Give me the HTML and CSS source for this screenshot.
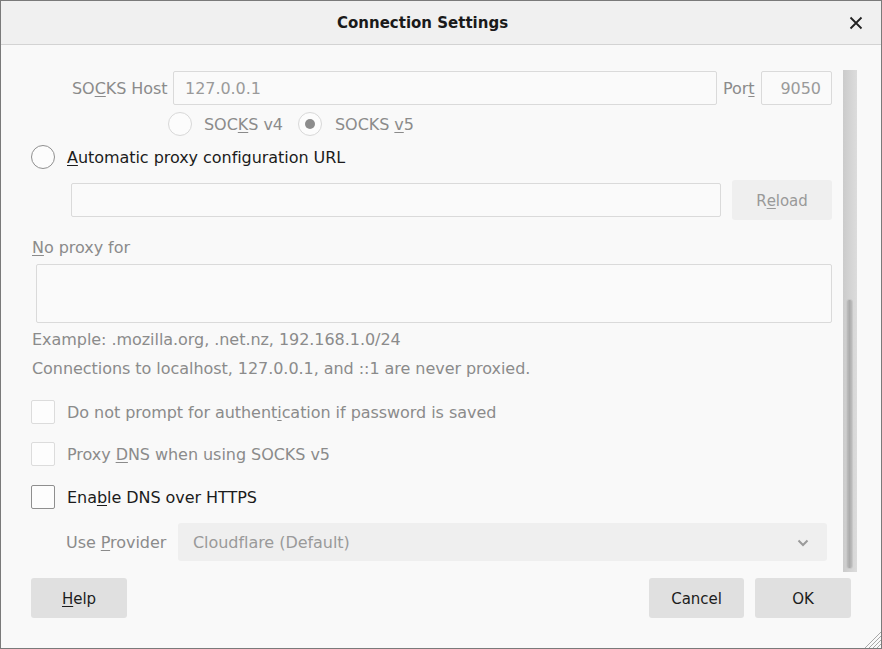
FILE: index.html
```html
<!DOCTYPE html>
<html>
<head>
<meta charset="utf-8">
<link rel="stylesheet" href="styles.css">
</head>
<body>
<div class="window">
  <div class="header">
    <div class="title">Connection Settings</div>
    <div class="close">
      <svg width="14" height="14" viewBox="0 0 14 14"><path d="M1.5 1.5 L12.5 12.5 M12.5 1.5 L1.5 12.5" stroke="#222" stroke-width="1.8" fill="none"/></svg>
    </div>
  </div>
  <div class="content">
    <div class="scrollarea">
      <div class="row-host">
        <span class="lbl-host dis">SO<u>C</u>KS Host</span>
        <div class="input host-input"><span class="val">127.0.0.1</span></div>
        <span class="lbl-port dis">Por<u>t</u></span>
        <div class="input port-input"><span class="val">9050</span></div>
      </div>
      <div class="row-socks">
        <span class="radio dis-r"></span>
        <span class="lbl-v4 dis">SOC<u>K</u>S v4</span>
        <span class="radio dis-r checked"><span class="dot"></span></span>
        <span class="lbl-v5 dis">SOCKS <u>v</u>5</span>
      </div>
      <div class="row-auto">
        <span class="radio"></span>
        <span class="lbl-check"><u>A</u>utomatic proxy configuration URL</span>
      </div>
      <div class="row-url">
        <div class="input url-input"></div>
        <div class="btn-reload">R<u>e</u>load</div>
      </div>
      <div class="lbl-noproxy dis"><u>N</u>o proxy for</div>
      <div class="textarea"></div>
      <div class="lbl-example dis">Example: .mozilla.org, .net.nz, 192.168.1.0/24</div>
      <div class="lbl-local dis">Connections to localhost, 127.0.0.1, and ::1 are never proxied.</div>
      <div class="row-check c1">
        <span class="checkbox dis-c"></span>
        <span class="lbl-check dis">Do not prompt for authent<u>i</u>cation if password is saved</span>
      </div>
      <div class="row-check c2">
        <span class="checkbox dis-c"></span>
        <span class="lbl-check dis">Proxy <u>D</u>NS when using SOCKS v5</span>
      </div>
      <div class="row-check c3">
        <span class="checkbox"></span>
        <span class="lbl-check">Ena<u>b</u>le DNS over HTTPS</span>
      </div>
      <div class="row-provider">
        <span class="lbl-provider dis">Use <u>P</u>rovider</span>
        <div class="select">
          <span class="sel-text">Cloudflare (Default)</span>
          <svg width="12" height="8" viewBox="0 0 12 8"><path d="M1.5 1.5 L6 6 L10.5 1.5" stroke="#9a9a9a" stroke-width="2" fill="none"/></svg>
        </div>
      </div>
    </div>
    <div class="scrollbar"><div class="thumb"></div></div>
  </div>
  <div class="footer">
    <div class="btn"><u>H</u>elp</div>
    <div class="spacer"></div>
    <div class="btn btn-cancel">Cancel</div>
    <div class="btn">OK</div>
  </div>
  <svg class="grip" width="19" height="19" viewBox="0 0 19 19">
    <path d="M19 3 L3 19 M19 7 L7 19 M19 11 L11 19 M19 15 L15 19" stroke="#a8a8a8" stroke-width="1" fill="none"/>
  </svg>
</div>
</body>
</html>
```
FILE: styles.css
```css
html, body {
  margin: 0;
  padding: 0;
  background: #f9f9f9;
}
body {
  font-family: "DejaVu Sans", "Liberation Sans", sans-serif;
  font-size: 16px;
  line-height: 20px;
  color: #1c1c1c;
  letter-spacing: -0.05px;
}
u {
  text-decoration: underline;
  text-underline-offset: 2px;
  text-decoration-thickness: 1px;
}
.window {
  position: relative;
  width: 882px;
  height: 649px;
  box-sizing: border-box;
  border: 1px solid #7a7a7a;
  background: #f9f9f9;
  display: flex;
  flex-direction: column;
  overflow: hidden;
}
.header {
  height: 43px;
  flex: none;
  background: #f0f0f0;
  border-bottom: 1px solid #d3d3d3;
  display: flex;
  align-items: center;
}
.title {
  margin-left: 336px;
  font-weight: bold;
  font-size: 15px;
  color: #1a1a1a;
  letter-spacing: 0;
}
.close {
  margin-left: auto;
  margin-right: 18px;
  width: 14px;
  height: 14px;
  display: flex;
}
.content {
  flex: none;
  height: 527px;
  box-sizing: border-box;
  padding-top: 25px;
  display: flex;
}
.scrollarea {
  flex: 1;
  padding: 0 11px 0 30px;
  display: flex;
  flex-direction: column;
}
.scrollbar {
  width: 14px;
  margin-right: 24px;
  background: linear-gradient(to right, #cbcbcb, #dcdcdc);
  position: relative;
}
.thumb {
  margin-left: 3px;
  margin-top: 229px;
  width: 7px;
  height: 270px;
  box-sizing: border-box;
  border: 1px solid #c8c8c8;
  border-radius: 3px;
  background: linear-gradient(to right, #bdbdbd, #ababab, #bdbdbd);
}
.dis {
  color: #8b8b8b;
}
.input {
  box-sizing: border-box;
  height: 34px;
  border: 1px solid #dadada;
  border-radius: 2px;
  background: #fafafa;
  display: flex;
  align-items: center;
  color: #9a9a9a;
  padding-top: 1px;
}
.row-host {
  margin-top: 1px;
  height: 34px;
  display: flex;
  align-items: center;
  padding-left: 41px;
}
.lbl-host {
  width: 101px;
  flex: none;
  padding-top: 2px;
}
.host-input {
  flex: 1;
  padding-left: 11px;
}
.lbl-port {
  width: 32px;
  margin: 0 6px;
  flex: none;
  padding-top: 2px;
}
.port-input {
  width: 71px;
  flex: none;
  justify-content: flex-end;
  padding-right: 10px;
}
.row-socks {
  margin-top: 7px;
  height: 24px;
  display: flex;
  align-items: center;
  padding-left: 137px;
}
.radio {
  flex: none;
  width: 24px;
  height: 24px;
  box-sizing: border-box;
  border-radius: 50%;
  border: 1px solid #8f8f8f;
  background: #fcfcfc;
  display: flex;
  align-items: center;
  justify-content: center;
}
.radio.dis-r {
  border-color: #d8d8d8;
}
.dot {
  width: 10px;
  height: 10px;
  border-radius: 50%;
  background: #8c8c8c;
}
.lbl-v4 {
  margin-left: 12px;
  width: 94px;
  padding-top: 2px;
}
.lbl-v5 {
  margin-left: 13px;
  padding-top: 2px;
}
.row-auto {
  margin-top: 9px;
  height: 24px;
  display: flex;
  align-items: center;
}
.lbl-check {
  margin-left: 12px;
  padding-top: 2px;
}
.row-url {
  margin-top: 11px;
  height: 40px;
  display: flex;
  align-items: center;
  padding-left: 40px;
}
.url-input {
  flex: 1;
}
.btn-reload {
  margin-left: 11px;
  width: 100px;
  height: 40px;
  box-sizing: border-box;
  padding-top: 1px;
  border-radius: 3px;
  background: #efefef;
  color: #999;
  font-size: 15px;
  display: flex;
  align-items: center;
  justify-content: center;
}
.lbl-noproxy {
  margin-top: 18px;
  padding-left: 1px;
}
.textarea {
  margin-top: 6px;
  margin-left: 5px;
  height: 59px;
  box-sizing: border-box;
  border: 1px solid #dadada;
  border-radius: 2px;
  background: #fafafa;
}
.lbl-example {
  margin-top: 7px;
  padding-left: 1px;
}
.lbl-local {
  margin-top: 9px;
  padding-left: 1px;
}
.row-check {
  height: 24px;
  display: flex;
  align-items: center;
}
.c1 { margin-top: 21px; }
.c2 { margin-top: 18px; }
.c3 { margin-top: 19px; }
.checkbox {
  flex: none;
  width: 24px;
  height: 24px;
  box-sizing: border-box;
  border: 1px solid #8f8f8f;
  border-radius: 2px;
  background: #fdfdfd;
}
.checkbox.dis-c {
  border-color: #dcdcdc;
}
.row-provider {
  margin-top: 14px;
  height: 38px;
  display: flex;
  align-items: center;
  padding-left: 35px;
}
.lbl-provider {
  width: 112px;
  flex: none;
  padding-top: 2px;
}
.select {
  flex: 1;
  margin-right: 5px;
  height: 38px;
  box-sizing: border-box;
  border-radius: 3px;
  background: #efefef;
  display: flex;
  align-items: center;
  padding: 1px 18px 0 15px;
  color: #9a9a9a;
}
.sel-text {
  flex: 1;
}
.footer {
  flex: 1;
  display: flex;
  align-items: flex-start;
  padding: 6px 30px 0 30px;
  gap: 11px;
}
.spacer {
  flex: 1;
}
.btn {
  width: 96px;
  height: 40px;
  box-sizing: border-box;
  padding-top: 2px;
  border-radius: 3px;
  background: #e0e0e0;
  font-size: 15px;
  color: #1c1c1c;
  display: flex;
  align-items: center;
  justify-content: center;
}
.btn-cancel {
  width: 95px;
}
.grip {
  position: absolute;
  right: 0;
  bottom: 0;
}
```
